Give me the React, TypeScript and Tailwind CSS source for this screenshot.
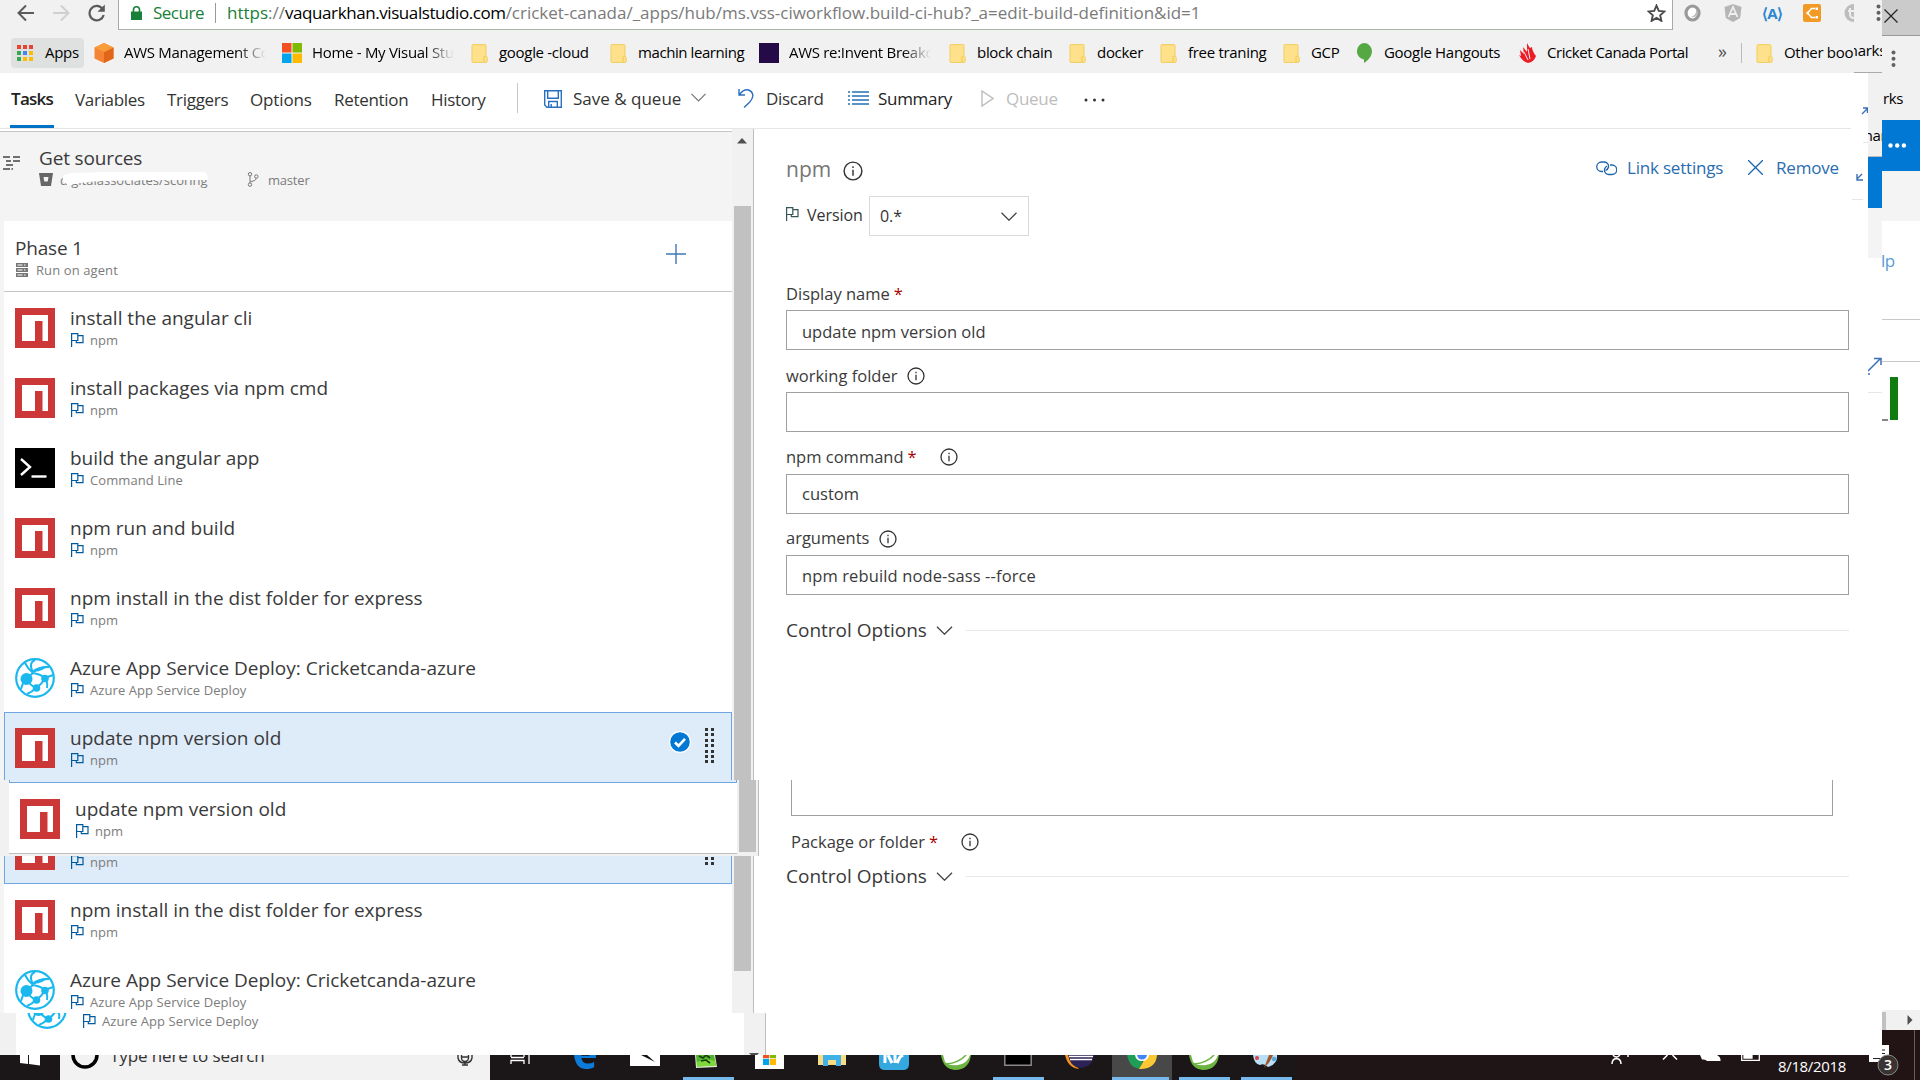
import type { ReactNode } from 'react';

type TaskKind = 'npm' | 'cmd' | 'azure';

interface Task {
  title: string;
  sub: string;
  kind: TaskKind;
  selected?: boolean;
}

const tasks: Task[] = [
  { title: 'install the angular cli', sub: 'npm', kind: 'npm' },
  { title: 'install packages via npm cmd', sub: 'npm', kind: 'npm' },
  { title: 'build the angular app', sub: 'Command Line', kind: 'cmd' },
  { title: 'npm run and build', sub: 'npm', kind: 'npm' },
  { title: 'npm install in the dist folder for express', sub: 'npm', kind: 'npm' },
  { title: 'Azure App Service Deploy: Cricketcanda-azure', sub: 'Azure App Service Deploy', kind: 'azure' },
  { title: 'update npm version old', sub: 'npm', kind: 'npm', selected: true },
];

const azureTask = tasks[5];

/* ---------- icons ---------- */

const NpmIcon = () => (
  <svg width="40" height="40" viewBox="0 0 40 40" className="block">
    <rect width="40" height="40" fill="#cb3837" />
    <path d="M7 7h26v26h-5.500V13H20v20H7z" fill="#fff" />
  </svg>
);

const CmdIcon = () => (
  <svg width="40" height="40" viewBox="0 0 40 40" className="block">
    <rect width="40" height="40" fill="#000" />
    <path d="M6 11l9 8-9 8" fill="none" stroke="#fff" strokeWidth="2.4" />
    <path d="M16.500 28.500h15" stroke="#fff" strokeWidth="2.400" />
  </svg>
);

const AzureIcon = () => (
  <svg width="40" height="40" viewBox="0 0 40 40" className="block" fill="none" stroke="#1ab8ee">
    <circle cx="20" cy="20" r="18.800" strokeWidth="2.200" />
    <path d="M10 5q3 6 8 10M18 15q7 1 12 5M18 15l-7 6M18 14q6-5 16-5M11 21q4 6 10 9M21 30q6-4 9-10M11 21q-4 5-5 10M21 30q-4 4-9 6M30 20l8-3M30 20q3 4 2 10M18 14Q13 5 20 2" strokeWidth="2" />
    <path d="M17 13q6-5 16-5-5 5-14 6z" fill="#1ab8ee" stroke="none" />
    <circle cx="11.500" cy="21" r="6" fill="#1ab8ee" stroke="none" />
    <circle cx="30" cy="20.500" r="3.800" fill="#1ab8ee" stroke="none" />
    <circle cx="21.500" cy="30" r="3.800" fill="#1ab8ee" stroke="none" />
  </svg>
);

const FlagIcon = ({ className }: { className?: string }) => (
  <svg width="13" height="14" viewBox="0 0 13 14" className={className} fill="none" stroke="currentColor" strokeWidth="1.200">
    <path d="M.6 14V.6h6.200v6.900H.6M6.800 2.600h5.200v7H5.300V7.500" />
  </svg>
);

const InfoIcon = ({ size = 18 }: { size?: number }) => (
  <svg width={size} height={size} viewBox="0 0 18 18" fill="none" stroke="#333" strokeWidth="1.300">
    <circle cx="9" cy="9" r="8" />
    <path d="M9 7.800v5.400M9 4.800v1.500" />
  </svg>
);

const Chevron = ({ w = 16, h = 9, color = '#444' }: { w?: number; h?: number; color?: string }) => (
  <svg width={w} height={h} viewBox="0 0 16 9" fill="none" stroke={color} strokeWidth="1.300">
    <path d="M.5.700L8 8.200 15.500.700" />
  </svg>
);

const FolderIcon = () => (
  <svg width="17" height="19" viewBox="0 0 17 19">
    <path d="M1 1.500Q1 .6 2 .6h12q1 0 1 1v10.500l1.200 1.200v4.200q0 .9-1 .9H2q-1 0-1-.9z" fill="#ffe18c" stroke="#f1cd5e" />
    <path d="M13 18v-5q0-1 1-1h1" fill="none" stroke="#efc94f" />
  </svg>
);

const MsLogo = ({ size = 20 }: { size?: number }) => (
  <svg width={size} height={size} viewBox="0 0 20 20">
    <path d="M0 0h9.500v9.500H0z" fill="#f25022" />
    <path d="M10.500 0H20v9.500h-9.500z" fill="#7fba00" />
    <path d="M0 10.500h9.500V20H0z" fill="#00a4ef" />
    <path d="M10.500 10.500H20V20h-9.500z" fill="#ffb900" />
  </svg>
);

const Dots = ({ rows }: { rows: number }) => (
  <div className="flex flex-col gap-[2.400px]">
    {Array.from({ length: rows }, (_, i) => (
      <div key={i} className="flex gap-[3px]">
        <span className="h-[3px] w-[3px] bg-[#333]" />
        <span className="h-[3px] w-[3px] bg-[#333]" />
      </div>
    ))}
  </div>
);

const VerticalDots = () => (
  <svg width="5" height="18" viewBox="0 0 5 18" fill="#5f6368">
    <circle cx="2.500" cy="2.500" r="2" />
    <circle cx="2.500" cy="8.800" r="2" />
    <circle cx="2.500" cy="15.100" r="2" />
  </svg>
);

/* ---------- browser chrome ---------- */

const AddressBar = () => (
  <div className="flex h-[30px]">
    <div className="flex w-[118px] items-start pt-[4px] pl-[17px]">
      <svg width="18" height="18" viewBox="0 0 18 18" fill="none" stroke="#5a5a5a" strokeWidth="2">
        <path d="M17 9H2M9 1.500L1.500 9 9 16.500" />
      </svg>
      <svg width="18" height="18" viewBox="0 0 18 18" className="ml-[17px]" fill="none" stroke="#d0d0d0" strokeWidth="2">
        <path d="M1 9h15M9 1.500L16.500 9 9 16.500" />
      </svg>
      <svg width="19" height="18" viewBox="0 0 19 18" className="ml-[17px]" fill="none" stroke="#5a5a5a" strokeWidth="2.200">
        <path d="M15.500 4.800A7.200 7.200 0 1 0 16.700 11" />
        <path d="M17.800.5v7.300h-7.300z" fill="#5a5a5a" stroke="none" />
      </svg>
    </div>
    <div className="flex w-[1555px] border-r border-b border-l border-[#a9a9a9] border-b-[#a9b5a6] bg-white pl-[12px] text-[17px] leading-[25px]">
      <svg width="11" height="14" viewBox="0 0 11 14" className="mt-[6px]">
        <path d="M0 5.500h11V14H0z" fill="#188038" />
        <path d="M2.500 6V3.800a3 3 0 0 1 6 0V6" fill="none" stroke="#188038" strokeWidth="1.600" />
      </svg>
      <span className="ml-[11px] w-[62px] tracking-[-0.5px] text-[#188038]">Secure</span>
      <span className="mt-[3px] h-[20px] w-[12px] border-l border-[#999]" />
      <span className="flex-1 whitespace-pre text-[#7a7a7a]">
        <span className="text-[#188038]">https</span>://<span className="tracking-[-0.42px] text-black">vaquarkhan.visualstudio.com</span>
        <span className="tracking-[-0.020px]">
          /cricket-canada/_apps/hub/ms.vss-ciworkflow.build-ci-hub?_a=edit-build-definition&amp;id=1
        </span>
      </span>
      <svg width="19" height="18" viewBox="0 0 24 23" className="mt-[4px] mr-[6px]" fill="none" stroke="#4a4a4a" strokeWidth="2.400">
        <path d="M12 2l2.900 6.800 7.300.7-5.500 4.900 1.600 7.200L12 17.800l-6.300 3.800 1.600-7.200L1.800 9.500l7.300-.7z" />
      </svg>
    </div>
    <div className="flex flex-1 items-start overflow-hidden pt-[4px] pl-[11px]">
      <svg width="17" height="18" viewBox="0 0 17 18">
        <ellipse cx="8.500" cy="9" rx="6.500" ry="7" fill="#fff" stroke="#999" strokeWidth="3.200" />
        <path d="M12 5q1 6-5 8 7 1 7-5z" fill="#bbb" />
      </svg>
      <svg width="18" height="18" viewBox="0 0 18 18" className="ml-[23px]">
        <path d="M9 0l8.500 3-1.300 11L9 18l-7.200-4L.5 3z" fill="#b5b5b5" />
        <path d="M4.500 13L9 3l4.500 10M6 10h6" fill="none" stroke="#eee" strokeWidth="1.800" />
      </svg>
      <span className="ml-[18px] w-[24px] text-center text-[15px] leading-[18px] font-bold tracking-[-1px] text-[#2a87d0]">⟨A⟩</span>
      <svg width="18" height="18" viewBox="0 0 18 18" className="ml-[19px]">
        <rect width="18" height="18" rx="2" fill="#f19a26" />
        <path d="M12 4.500H8.500L4.500 9l4 4.500H12" fill="none" stroke="#fff" strokeWidth="1.400" />
        <path d="M12.500 3.500h2.500v2.500h-2.500zM12.500 12h2.500v2.500h-2.500zM3.500 7.800h2.500v2.500H3.500z" fill="#fff" />
      </svg>
      <div className="ml-[23px] h-[20px] w-[10px] overflow-hidden">
        <svg width="19" height="18" viewBox="0 0 19 18">
          <circle cx="9.500" cy="9" r="9" fill="#bdbdbd" />
          <path d="M6 4v6q0 4 4 4M4 7h6" fill="none" stroke="#eee" strokeWidth="2" />
        </svg>
      </div>
      <div className="ml-[22px]">
        <VerticalDots />
      </div>
    </div>
  </div>
);

interface BookmarkProps {
  icon: ReactNode;
  label: string;
  className: string;
  fade?: boolean;
}

const Bookmark = ({ icon, label, className, fade }: BookmarkProps) => (
  <div className={`flex shrink-0 items-center overflow-hidden whitespace-nowrap ${className}`}>
    <span className={fade ? 'w-[30px] shrink-0' : 'w-[28px] shrink-0'}>{icon}</span>
    {fade ? (
      <span className="mb-[2px] w-[142px] overflow-hidden bg-[linear-gradient(90deg,#000_80%,transparent)] bg-clip-text text-transparent">
        {label}
      </span>
    ) : (
      <span className="mb-[2px]">{label}</span>
    )}
  </div>
);

const appColors = [
  'bg-[#ea4335]', 'bg-[#ea4335]', 'bg-[#ea4335]',
  'bg-[#34a853]', 'bg-[#4285f4]', 'bg-[#fbbc05]',
  'bg-[#34a853]', 'bg-[#fbbc05]', 'bg-[#fbbc05]',
];

const BookmarksBar = () => (
  <div className="flex h-[43px] items-center pt-[3px] text-[15px] tracking-[-0.3px] text-black">
    <div className="mb-px ml-[11px] flex h-[30px] w-[73px] items-center rounded-[4px] bg-[#dfe0e0] pl-[6px]">
      <div className="grid grid-cols-3 gap-[2px]">
        {appColors.map((c, i) => (
          <span key={i} className={`h-[4px] w-[4px] ${c}`} />
        ))}
      </div>
      <span className="mb-px ml-[12px]">Apps</span>
    </div>
    <Bookmark
      className="ml-[10px] w-[188px]"
      fade
      label="AWS Management Console"
      icon={
        <svg width="20" height="20" viewBox="0 0 20 20">
          <path d="M10 0l9.500 4.500v11L10 20 .5 15.500v-11z" fill="#f58534" />
          <path d="M10 9l9.500-4.500v11L10 20z" fill="#e2661a" />
          <path d="M10 0l9.500 4.500L10 9 .5 4.500z" fill="#f89c3c" />
        </svg>
      }
    />
    <Bookmark className="w-[189px]" fade label="Home - My Visual Studio" icon={<MsLogo />} />
    <Bookmark className="w-[139px]" label="google -cloud" icon={<FolderIcon />} />
    <Bookmark className="w-[149px] tracking-[-0.420px]" label="machin learning" icon={<FolderIcon />} />
    <Bookmark
      className="w-[190px]"
      fade
      label="AWS re:Invent Breakout"
      icon={<span className="block h-[20px] w-[20px] bg-[#250a48]" />}
    />
    <Bookmark className="w-[120px]" label="block chain" icon={<FolderIcon />} />
    <Bookmark className="w-[91px]" label="docker" icon={<FolderIcon />} />
    <Bookmark className="w-[123px]" label="free traning" icon={<FolderIcon />} />
    <Bookmark className="w-[73px]" label="GCP" icon={<FolderIcon />} />
    <Bookmark
      className="w-[163px]"
      label="Google Hangouts"
      icon={
        <svg width="16" height="20" viewBox="0 0 16 20">
          <path d="M8 0a8 8.300 0 0 1 8 8.300c0 5-4 9-8 11.700v-3.500A8 8.300 0 0 1 8 0z" fill="#56a845" />
        </svg>
      }
    />
    <Bookmark
      className="w-[199px] tracking-[-0.450px]"
      label="Cricket Canada Portal"
      icon={
        <svg width="17" height="20" viewBox="0 0 17 20" fill="#ee1c24">
          <path d="M8 0q2 4 3 5l2-1q0 4 4 9-2 6-8 7Q4 19 0 12l2 1-1-6 4 4-1-7 4 5z" />
          <path d="M5 9l4 8M9 6l2 10" stroke="#f1f1f1" />
        </svg>
      }
    />
    <span className="mb-[3px] w-[23px] text-[18px] text-[#555]">»</span>
    <span className="h-[20px] w-[15px] border-l border-[#bbb]" />
    <Bookmark className="w-[98px]" label="Other bookmarks" icon={<FolderIcon />} />
    <div className="flex h-[40px] w-[28px] justify-end overflow-hidden border-b border-[#aaa] pt-[6px]">
      <span className="mr-[-4px]">marks</span>
    </div>
  </div>
);

/* ---------- build definition toolbar ---------- */

const Toolbar = () => (
  <div className="mr-[17px] flex h-[56px] items-center border-b border-[#e6e6e6] pb-[2px] text-[17px] tracking-[-0.3px] whitespace-nowrap text-[#333]">
    <div className="mb-[-2px] ml-[10px] flex h-[55px] w-[44px] items-center justify-center border-b-[3px] border-[#0072c6] font-semibold tracking-[-0.8px] text-[#222]">
      Tasks
    </div>
    <span className="ml-[21px] w-[92px]">Variables</span>
    <span className="w-[83px]">Triggers</span>
    <span className="w-[84px] tracking-[-0.150px]">Options</span>
    <span className="w-[97px]">Retention</span>
    <span className="w-[86px]">History</span>
    <span className="mb-[3px] h-[30px] w-[27px] border-l border-[#c8c8c8]" />
    <svg width="18" height="18" viewBox="0 0 18 18" className="mb-[2px]" fill="none" stroke="#2b6fc0" strokeWidth="1.400">
      <path d="M.7.7h16.600v16.600H3L.7 15zM3.700.7v7.600h10.600V.7M4.700 17v-5.500h8.600V17M7.200 17v-3" />
    </svg>
    <span className="mb-[2px] ml-[11px] w-[118px] tracking-[0px]">Save &amp; queue</span>
    <span className="mb-[4px]">
      <Chevron w={15} h={9} color="#777" />
    </span>
    <svg width="16" height="20" viewBox="0 0 16 20" className="mb-[3px] ml-[32px]" fill="none" stroke="#2b6fc0" strokeWidth="1.400">
      <path d="M1 1v6h6M1.500 6.500Q6 .7 10.500 2q4.500 1.800 4.300 6-.3 3-3 6L6 19.500" />
    </svg>
    <span className="mb-[2px] ml-[12px] w-[82px]">Discard</span>
    <svg width="21" height="14" viewBox="0 0 21 14" className="mb-[3px]" fill="none" stroke="#2272b4" strokeWidth="1.400">
      <path d="M4 1h17M4 5h17M4 9h17M4 13h17" />
      <path d="M0 1h2M0 5h2M0 9h2M0 13h2" />
    </svg>
    <span className="mb-[2px] ml-[9px] w-[103px] text-[#222]">Summary</span>
    <svg width="13" height="17" viewBox="0 0 13 17" className="mb-[3px]" fill="none" stroke="#bdbdbd" strokeWidth="1.400">
      <path d="M1 1l11 7.500L1 16z" />
    </svg>
    <span className="mb-[2px] ml-[12px] w-[78px] text-[#bdbdbd]">Queue</span>
    <svg width="22" height="4" viewBox="0 0 22 4" fill="#333">
      <circle cx="2" cy="2" r="1.500" />
      <circle cx="10.500" cy="2" r="1.500" />
      <circle cx="19" cy="2" r="1.500" />
    </svg>
  </div>
);

/* ---------- left pane ---------- */

const icons: Record<TaskKind, ReactNode> = {
  npm: <NpmIcon />,
  cmd: <CmdIcon />,
  azure: <AzureIcon />,
};

const TaskRow = ({ task }: { task: Task }) => (
  <div
    className={`flex h-[70px] shrink-0 border pl-[10px] ${
      task.selected ? 'border-[#6fa5e0] bg-[#deebf9]' : 'border-transparent bg-white'
    }`}
  >
    <div className="mt-[15px] w-[55px]">{icons[task.kind]}</div>
    <div className="flex-1 pt-[14px] whitespace-nowrap">
      <div className="text-[19px] leading-[22px] text-[#3a3a3a]">{task.title}</div>
      <div className="flex text-[13px] leading-[22px] tracking-[0.080px] text-[#7c7c7c]">
        <FlagIcon className="mt-[4px] mr-[6px] ml-px text-[#005a9e]" />
        {task.sub}
      </div>
    </div>
    {task.selected && (
      <div className="flex">
        <svg width="22" height="22" viewBox="0 0 22 22" className="mt-[18px]">
          <circle cx="11" cy="11" r="11" fill="#fff" />
          <circle cx="11" cy="11" r="9.800" fill="#0078d4" />
          <path d="M6 11.500l3.500 3.300 6.500-7" fill="none" stroke="#fff" strokeWidth="2.600" />
        </svg>
        <div className="mt-[15px] mr-[17px] ml-[14px]">
          <Dots rows={7} />
        </div>
      </div>
    )}
  </div>
);

const GetSources = () => (
  <div className="mt-[2px] flex h-[90px] border-t border-[#c6c6c6] bg-[#f4f4f4] pt-[15px] pl-[3px]">
    <svg width="18" height="14" viewBox="0 0 18 14" className="mt-[9px]" fill="none" stroke="#444" strokeWidth="1.500">
      <path d="M0 1h8M10 1h7M3 5h5M10 5h7M3 9h8M0 13h10" strokeDasharray="7 1.500" />
    </svg>
    <div className="ml-[18px]">
      <div className="text-[19px] leading-[22px] tracking-[-0.150px] text-[#3a3a3a]">Get sources</div>
      <div className="flex text-[13px] leading-[22px] text-[#7c7c7c]">
        <svg width="14" height="13" viewBox="0 0 14 13" className="mt-[4px] mr-[7px]">
          <path d="M0 0h14l-2 13H2z" fill="#666" />
          <path d="M4.500 4h5l-.8 4.500H5.300z" fill="#f4f4f4" />
        </svg>
        <span className="relative w-[187px]">
          digitalassociates/scoring
          <svg width="150" height="15" viewBox="0 0 150 15" className="absolute top-[2px] left-0" fill="#fff">
            <path d="M3 5q2-2 10-3l35-1h95q5 0 5 8h-60l-50 1-18 2-10 2H8q-6-3-5-9z" />
          </svg>
        </span>
        <svg width="12" height="15" viewBox="0 0 12 15" className="mt-[3px] mr-[9px]" fill="none" stroke="#767676">
          <circle cx="3" cy="2.200" r="1.700" />
          <circle cx="3" cy="12.600" r="1.700" />
          <circle cx="9.300" cy="4.500" r="1.700" />
          <path d="M3 4v7M9.300 6.200Q9 9 3.500 9.500" />
        </svg>
        <span className="tracking-[-0.200px]">master</span>
      </div>
    </div>
  </div>
);

const PhaseHeader = () => (
  <div className="flex h-[71px] justify-between border-b border-[#c4c4c4] bg-white pt-[16px] pr-[46px] pl-[12px]">
    <div>
      <div className="ml-[-1px] text-[19px] leading-[22px] tracking-[-0.200px] text-[#3a3a3a]">Phase 1</div>
      <div className="flex text-[13px] leading-[22px] tracking-[0.100px] text-[#7c7c7c]">
        <svg width="12" height="14" viewBox="0 0 12 14" className="mt-[4px] mr-[8px]">
          <path d="M0 0h12v4H0zM0 5h12v4H0zM0 10h12v4H0z" fill="#777" />
          <path d="M1.500 2h5M1.500 7h5M1.500 12h5M8 2h1.500M8 7h1.500M8 12h1.500" stroke="#fff" />
        </svg>
        Run on agent
      </div>
    </div>
    <svg width="20" height="20" viewBox="0 0 20 20" className="mt-[7px]" stroke="#3f78b5" strokeWidth="1.400">
      <path d="M10 0v20M0 10h20" />
    </svg>
  </div>
);

interface ScrollTrackProps {
  children?: ReactNode;
}

const ScrollTrack = ({ children }: ScrollTrackProps) => (
  <div className="flex w-[22px] shrink-0 flex-col items-center overflow-hidden border-r border-[#bdbdbd] bg-[#f1f1f1] pr-[1px]">
    {children}
  </div>
);

/* ---------- form ---------- */

interface LabelProps {
  text: string;
  className: string;
  required?: boolean;
  info?: boolean;
}

const Label = ({ text, className, required, info }: LabelProps) => (
  <div className={`flex items-center text-[16.500px] text-[#3a3a3a] ${className}`}>
    {text}
    {required && <span className="ml-[4px] text-[#a80000]">*</span>}
    {info && (
      <span className={required ? 'ml-[23px]' : 'ml-[10px]'}>
        <InfoIcon />
      </span>
    )}
  </div>
);

const Field = ({ value, className = 'leading-[38px]' }: { value: string; className?: string }) => (
  <div className={`h-[40px] border border-[#a0a0a0] bg-white pt-px pl-[15px] text-[16.500px] text-[#3a3a3a] ${className}`}>
    {value}
  </div>
);

const ControlOptions = () => (
  <div className="flex h-[40px] items-center text-[19px] text-[#3a3a3a]">
    <span className="w-[150px] whitespace-nowrap">Control Options</span>
    <Chevron w={17} h={9} />
    <span className="ml-[13px] h-px flex-1 bg-[#e8e8e8]" />
  </div>
);

const TaskForm = () => (
  <div className="flex flex-1 flex-col bg-white pt-[10px] pr-[19px] pl-[32px]">
    <div className="flex h-[57px] items-center">
      <span className="mt-[5px] text-[21px] text-[#767676]">npm</span>
      <span className="mt-[6px] ml-[12px] flex-1">
        <InfoIcon size={20} />
      </span>
      <div className="flex items-center text-[17px] tracking-[-0.200px] text-[#2a6cb0]">
        <svg width="21" height="16" viewBox="0 0 21 16" fill="none" stroke="#1c65b0" strokeWidth="1.300">
          <path d="M7 11.500H5.500a4.500 4.500 0 1 1 0-9.500h3a4.300 4.300 0 0 1 4 5q-.5 2.500-3 3.500" />
          <path d="M14 5h2a4.500 4.500 0 1 1 0 9.500h-3.500a4.300 4.300 0 0 1-4-5Q9 7 11 6" />
        </svg>
        <span className="ml-[10px] w-[121px]">Link settings</span>
        <svg width="15" height="15" viewBox="0 0 15 15" stroke="#1c65b0" strokeWidth="1.300">
          <path d="M0 0l15 15M15 0L0 15" />
        </svg>
        <span className="mr-[11px] ml-[13px] w-[62px]">Remove</span>
      </div>
    </div>
    <div className="flex h-[40px] items-center text-[16px] tracking-[-0.050px] text-[#333]">
      <FlagIcon className="mb-[4px] text-[#355]" />
      <span className="mb-[2px] ml-[8px] w-[62px]">Version</span>
      <div className="flex h-[40px] w-[160px] items-center justify-between border border-[#dadada] pr-[11px] pl-[10px]">
        <span>0.*</span>
        <Chevron />
      </div>
    </div>
    <Label className="mt-[43px] h-[31px] pb-px" text="Display name" required />
    <Field value="update npm version old" className="leading-[39px]" />
    <Label className="h-[42px] pt-[10px]" text="working folder" info />
    <Field value="" />
    <Label className="h-[42px] pt-[8px]" text="npm command" required info />
    <Field value="custom" className="leading-[36px]" />
    <Label className="h-[41px] pt-[8px]" text="arguments" info />
    <Field value="npm rebuild node-sass --force" className="leading-[38px] tracking-[0.120px]" />
    <div className="mt-[15px]">
      <ControlOptions />
    </div>
  </div>
);

/* The editor body is a stack of full-width bands, each scrolled and indented differently. */
const Editor = () => (
  <div className="flex flex-1 flex-col overflow-hidden bg-white">
    <div className="flex h-[651px] overflow-hidden">
      <div className="w-[732px] shrink-0">
        <GetSources />
        <div className="bg-[#f4f4f4] pl-[4px]">
          <PhaseHeader />
          {tasks.map((t) => (
            <TaskRow key={t.title} task={t} />
          ))}
        </div>
      </div>
      <ScrollTrack>
        <svg width="10" height="6" viewBox="0 0 10 6" className="mt-[9px]">
          <path d="M5 0l5 5.500H0z" fill="#505050" />
        </svg>
        <div className="mt-[62px] w-[17px] flex-1 bg-[#c1c1c1]" />
      </ScrollTrack>
      <TaskForm />
    </div>

    <div className="flex h-[76px] shrink-0 overflow-hidden">
      <div className="w-[737px] shrink-0 bg-[#f1f1f1] pl-[9px]">
        <div className="h-[3px] border-r border-b border-l border-[#6fa5e0] bg-[#deebf9]" />
        <div className="h-[71px] border-b border-[#bdbdbd] bg-white">
          <TaskRow task={{ ...tasks[6], selected: false }} />
        </div>
      </div>
      <ScrollTrack>
        <div className="h-[72px] w-[17px] bg-[#c1c1c1]" />
      </ScrollTrack>
      <div className="flex-1 pr-[35px] pl-[32px]">
        <div className="h-[36px] border-r border-b border-l border-[#a0a0a0]" />
        <Label className="h-[40px] pt-[12px]" text="Package or folder" required info />
      </div>
    </div>

    <div className="flex h-[157px] shrink-0 overflow-hidden">
      <div className="w-[732px] shrink-0 bg-[#f4f4f4] pl-[4px]">
        <div className="mt-[-42px]">
          <TaskRow task={tasks[6]} />
          <TaskRow task={tasks[4]} />
          <TaskRow task={azureTask} />
        </div>
      </div>
      <ScrollTrack>
        <div className="h-[115px] w-[17px] bg-[#c1c1c1]" />
      </ScrollTrack>
      <div className="flex-1 pr-[19px] pl-[32px]">
        <ControlOptions />
      </div>
    </div>

    <div className="flex h-[42px] shrink-0 overflow-hidden">
      <div className="w-[744px] shrink-0 bg-[#f1f1f1] pl-[16px]">
        <div className="mt-[-40px]">
          <TaskRow task={azureTask} />
        </div>
        <div className="h-[12px] bg-white" />
      </div>
      <ScrollTrack>
        <svg width="10" height="2" viewBox="0 0 10 2" className="mt-[40px]">
          <path d="M0 0h10L8 2H2z" fill="#505050" />
        </svg>
      </ScrollTrack>
    </div>
  </div>
);

/* ---------- right-hand slices ---------- */

const NarrowSlice = () => (
  <div className="flex w-[14px] shrink-0 flex-col overflow-hidden bg-white">
    <div className="flex h-[84px] flex-col justify-end border-b border-[#bbb] bg-[#f1f1f1] pb-[10px] text-[15px] tracking-[-0.300px]">
      <span className="ml-[-9px]">mar</span>
    </div>
    <div className="h-[51px] bg-[#0078d4]" />
    <div className="h-[50px] bg-[#f4f4f4]" />
    <svg width="14" height="18" viewBox="0 0 14 18" className="mt-[99px]" fill="none" stroke="#3a6fb5" strokeWidth="1.500">
      <path d="M0 14L12 2M6 1.500h7V8M0 17h2" />
    </svg>
    <div className="mt-[17px] h-px bg-[#e6e6e6]" />
  </div>
);

const WindowEdge = () => (
  <div className="flex w-[38px] shrink-0 flex-col overflow-hidden bg-white">
    <div className="h-[36px] border-b border-[#999] bg-[#cbcbcb] pt-[9px] pl-[2px]">
      <svg width="14" height="14" viewBox="0 0 14 14" stroke="#222" strokeWidth="1.200">
        <path d="M.5.5l13 13M13.500.5l-13 13" />
      </svg>
    </div>
    <div className="flex h-[84px] flex-col bg-[#f1f1f1] pt-[14px] pl-[9px] text-[15px] tracking-[-0.400px]">
      <VerticalDots />
      <span className="mt-[19px] ml-[-8px]">rks</span>
    </div>
    <div className="flex h-[51px] items-center bg-[#0078d4] pb-px pl-[6px]">
      <svg width="19" height="5" viewBox="0 0 19 5" fill="#fff">
        <circle cx="2.500" cy="2.500" r="2.200" />
        <circle cx="9.200" cy="2.500" r="2.200" />
        <circle cx="15.900" cy="2.500" r="2.200" />
      </svg>
    </div>
    <div className="h-[50px] bg-[#f4f4f4]" />
    <div className="h-[98px] pt-[28px] text-[17px] leading-[24px] tracking-[-0.500px] text-[#5a9bd4]">
      <span className="ml-[-1px]">lp</span>
    </div>
    <div className="h-[42px] border-t border-[#c8c8c8]" />
    <div className="flex h-[649px] items-start border-t border-[#c8c8c8]">
      <span className="mt-[57px] h-[2px] w-[6px] bg-[#888]" />
      <span className="mt-[15px] ml-[2px] h-[43px] w-[8px] bg-[#107c10]" />
    </div>
    <div className="flex h-[20px] items-center bg-[#f1f1f1]">
      <span className="mt-[2px] h-[18px] w-[4px] bg-[#c1c1c1]" />
      <svg width="6" height="10" viewBox="0 0 6 10" className="ml-[21px]">
        <path d="M.5 0L5.500 5 .5 10z" fill="#505050" />
      </svg>
    </div>
    <div className="flex flex-1 bg-[#221414] pl-[32px]">
      <span className="w-px bg-[#6a5c5c]" />
    </div>
  </div>
);

/* ---------- taskbar ---------- */

const Slot = ({ children, active, open }: { children: ReactNode; active?: boolean; open?: boolean }) => (
  <div className="relative flex h-[25px] w-[62px] shrink-0 justify-center overflow-hidden">
    {active && <span className="absolute inset-y-0 left-[2px] w-[60px] bg-[#484848]" />}
    <span className="relative">{children}</span>
    {open && (
      <span
        className={`absolute bottom-0 h-[3px] bg-[#76b9ed] ${active ? 'left-[2px] w-[57px]' : 'left-[7px] w-[51px]'}`}
      />
    )}
  </div>
);

const Leaf = () => (
  <svg width="30" height="15" viewBox="0 0 30 15">
    <path d="M0 0h30q-2 15-16 15Q2 14 0 0z" fill="#6db33f" />
    <path d="M2 0h27q-3 9-12 10Q8 11 4 7z" fill="#fff" />
    <path d="M5 9q13-1 20-9" fill="none" stroke="#6db33f" strokeWidth="1.500" />
  </svg>
);

const Taskbar = () => (
  <div className="flex h-[25px] bg-[#1b1617]">
    <div className="w-[60px] pl-[20px]">
      <svg width="20" height="11" viewBox="0 0 20 11" fill="#fff">
        <path d="M0 0h8v9L0 8zM9 0h11v10.500L9 9z" />
      </svg>
    </div>
    <div className="flex w-[430px] overflow-hidden bg-[#f2f2f2] pl-[11px]">
      <svg width="28" height="14" viewBox="0 0 28 14" fill="none" stroke="#000" strokeWidth="3.500">
        <path d="M2 0a12 12 0 0 0 24 0" />
      </svg>
      <span className="mt-[-11px] ml-[11px] w-[347px] text-[17px] leading-[24px] tracking-[-0.100px] text-[#333]">
        Type here to search
      </span>
      <svg width="16" height="11" viewBox="0 0 16 11" fill="none" stroke="#333" strokeWidth="1.400">
        <path d="M4.500 0v3a3.500 3.500 0 0 0 7 0V0M1 0v3q1 5 7 5t7-5V0M8 8v2M5 10h6M4.500 2h7" />
      </svg>
    </div>
    <Slot>
      <svg width="20" height="9" viewBox="0 0 20 9" className="mr-[3px]" fill="none" stroke="#fff" strokeWidth="1.300">
        <path d="M1 0v2M14 0v2M1 2.500h13M1 9V5.500h13V9M19 0v9" />
      </svg>
    </Slot>
    <Slot>
      <svg width="22" height="14" viewBox="0 0 24 14" className="ml-[4px]" preserveAspectRatio="none">
        <path d="M0 0h24v3H8q1 5.500 7 5.500 4 0 7-1.500v5q-3 2-9 2Q2 14 0 0z" fill="#0d7bd8" />
        <path d="M8 0h9v.8H8z" fill="#1b1617" />
      </svg>
    </Slot>
    <Slot>
      <svg width="30" height="11" viewBox="0 0 30 11">
        <path d="M0 0h30v11H0z" fill="#fff" />
        <path d="M11 0l14 7-8-7z" fill="#111" />
      </svg>
    </Slot>
    <Slot open>
      <svg width="24" height="13" viewBox="0 0 24 13" className="mr-[3px]">
        <path d="M1 0h20l2 12-21 1z" fill="#dfe8d0" />
        <path d="M2 0h18l2 10.500-19 1z" fill="#53b52c" />
        <path d="M3 7q9-4 18-1l.6 4.500-18.500 1z" fill="#7fd83c" />
        <path d="M5 1l4 2 3-3 4 3M7 6l5-1 4 3" stroke="#173b0c" strokeWidth="1.600" fill="none" />
      </svg>
    </Slot>
    <Slot>
      <span className="ml-px flex h-[14px] w-[29px] items-end justify-center overflow-hidden bg-white pb-[4px]">
        <MsLogo size={13} />
      </span>
    </Slot>
    <Slot>
      <svg width="28" height="11" viewBox="0 0 28 11" className="ml-[2px]">
        <path d="M0 0h28v10H0z" fill="#f7dc85" />
        <path d="M5 0h18v11h-5V5h-8v6H5z" fill="#3fb1e6" />
      </svg>
    </Slot>
    <Slot>
      <svg width="30" height="15" viewBox="0 0 30 15" className="ml-[2px]">
        <path d="M0 0h30v9q0 6-6 6H6q-6 0-6-6z" fill="#35a8e0" />
        <path d="M6 0v8M9 0l4 8M16 0v8M18 8l3-6 3-2" stroke="#fff" strokeWidth="3" fill="none" />
      </svg>
    </Slot>
    <Slot>
      <span className="ml-[2px] block">
        <Leaf />
      </span>
    </Slot>
    <Slot open>
      <svg width="28" height="11" viewBox="0 0 28 11" className="ml-px">
        <path d="M.8 0v10.200h26.400V0" fill="#000" stroke="#888" strokeWidth="1.500" />
      </svg>
    </Slot>
    <Slot>
      <svg width="30" height="14" viewBox="0 0 30 14" className="ml-[2px]">
        <path d="M0 0h8q0 9 6 14Q3 13 0 0z" fill="#f7941e" />
        <path d="M3 0h26q-1 12-14 13Q5 12 3 0z" fill="#2c2255" />
        <path d="M4 1.500h24M5 4.500h22" stroke="#fff" strokeWidth="1.500" />
      </svg>
    </Slot>
    <Slot active open>
      <svg width="30" height="14" viewBox="0 0 30 14" className="ml-[2px]">
        <path d="M0 0h10l6 6-4 8Q2 12 0 0z" fill="#1e9e57" />
        <path d="M20 0h10q-1 13-15 14l-3 0z" fill="#fcc934" />
        <path d="M8 0h14q-1 6-7 6T8 0z" fill="#fff" />
        <path d="M10 0h10q-1 4.500-5 4.500T10 0z" fill="#4285f4" />
      </svg>
    </Slot>
    <Slot open>
      <span className="ml-[2px] block">
        <Leaf />
      </span>
    </Slot>
    <Slot open>
      <svg width="28" height="14" viewBox="0 0 28 14">
        <path d="M2 0h24q1 9-9 12-4-4-8-2Q3 9 2 0z" fill="#b8dff5" />
        <path d="M22 0q-3 8-9 13l5-13z" fill="#a0562a" />
        <circle cx="6" cy="3" r="2" fill="#d44" />
        <circle cx="23" cy="4" r="2.200" fill="#58a6d8" />
      </svg>
    </Slot>
    <div className="flex flex-1 items-start bg-[#201516] pl-[315px] text-white">
      <svg width="20" height="9" viewBox="0 0 20 9" fill="none" stroke="#fff" strokeWidth="1.500">
        <path d="M2 0q3 4 7 0M1 9q0-5 4.500-5.500Q10 4 10 9M17 0v2" />
      </svg>
      <svg width="16" height="5" viewBox="0 0 16 5" className="ml-[31px]" fill="none" stroke="#fff" strokeWidth="1.500">
        <path d="M1 4.500L5.500 0M15 4.500L10.500 0" />
      </svg>
      <svg width="21" height="6" viewBox="0 0 21 6" className="ml-[22px]" fill="#fff">
        <path d="M0 0h17q4 2 3.500 6H7Q6 4 2 4.500z" />
      </svg>
      <svg width="19" height="6" viewBox="0 0 19 6" className="ml-[20px]" fill="none" stroke="#fff" strokeWidth="1.300">
        <path d="M.7 0v5.300h17.600V0" />
        <path d="M3 0h8v3H3z" fill="#fff" />
      </svg>
      <span className="ml-[18px] text-[15px] leading-[23px] tracking-[-0.350px]">8/18/2018</span>
    </div>
  </div>
);

const App = () => (
  <div className="relative flex h-[1080px] w-[1920px] overflow-hidden bg-white font-['Open_Sans',sans-serif]">
    <div className="flex w-[1882px] shrink-0 flex-col">
      <div className="h-[73px] shrink-0 bg-[#f1f1f1]">
        <AddressBar />
        <BookmarksBar />
      </div>
      <div className="flex h-[982px] shrink-0">
        <div className="relative flex w-[1868px] flex-col">
          <Toolbar />
          <Editor />
          {/* resize handles hanging over the panel edge */}
          <svg width="17" height="94" viewBox="0 0 17 94" className="absolute top-[33px] right-0" fill="none" stroke="#3a6fb5" strokeWidth="1.400">
            <path d="M11 8l5-5M12 2h4.500v5M11 68l-5 5M6 68v6h6" />
            <path d="M12 36.500h5M1 93.500h11" stroke="#e6e6e6" strokeWidth="1" />
          </svg>
        </div>
        <NarrowSlice />
      </div>
      <Taskbar />
    </div>
    <WindowEdge />
    {/* action center badge */}
    <svg width="34" height="36" viewBox="0 0 34 36" className="absolute top-[1043px] left-[1868px]">
      <path d="M14 2h7v12h-3v5h-6l-2-1v1H1v-7h13z" fill="#fff" />
      <path d="M14 7h3M14 10.500h3M5 15.500h8" stroke="#222" />
      <circle cx="20" cy="22" r="10" fill="#3a3332" stroke="#888" />
    </svg>
    <span className="absolute top-[1055px] left-[1884px] text-[14px] leading-[20px] font-semibold text-white">3</span>
  </div>
);

export default App;
